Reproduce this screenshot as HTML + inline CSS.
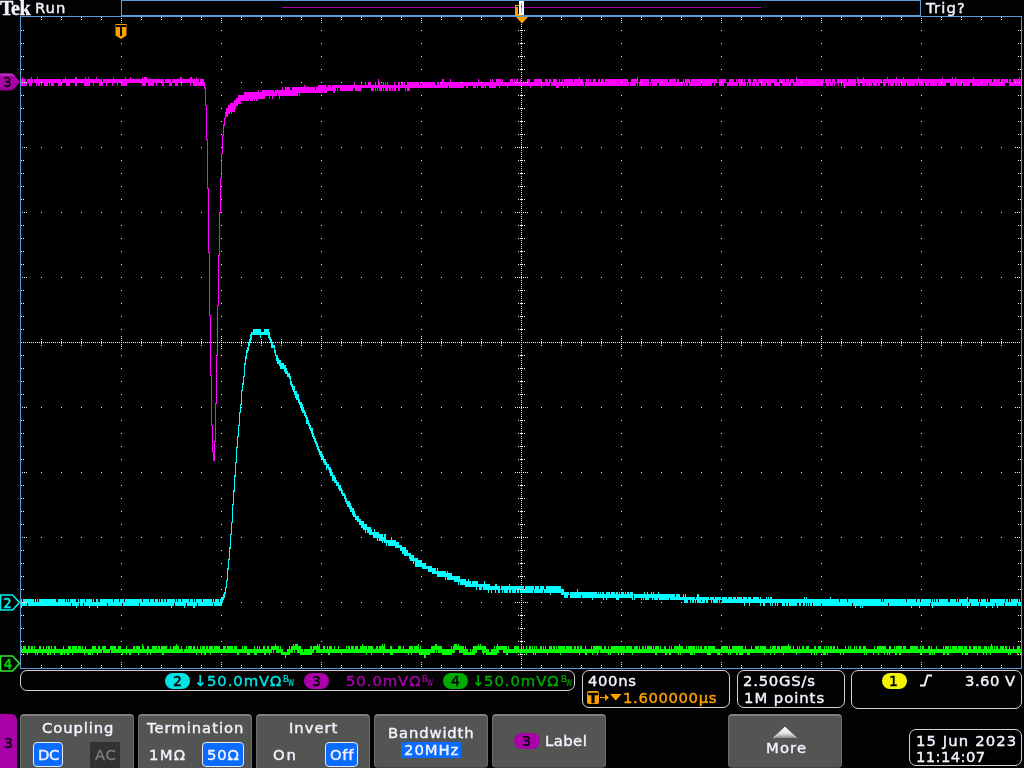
<!DOCTYPE html>
<html><head><meta charset="utf-8"><title>Tek scope</title>
<style>
html,body{margin:0;padding:0;background:#010201}
body{width:1024px;height:768px;overflow:hidden;position:relative;font-family:"DejaVu Sans","Liberation Sans",sans-serif;font-size:14.8px;color:#f3f3ff;line-height:16px}
.t{position:absolute;white-space:nowrap;will-change:transform;-webkit-text-stroke:.4px}
.box{position:absolute;box-sizing:border-box;border:1px solid #d4d4d4;border-radius:7px}
.pill{position:absolute;box-sizing:border-box;width:25px;height:16px;border-radius:8px}
.btn{position:absolute;box-sizing:border-box;top:714px;height:60px;width:114px;background:#535553;border:1px solid #6c6c6c;border-top:2px solid #808080;border-bottom:1px solid #444;border-radius:4px}
.sel{position:absolute;box-sizing:border-box;background:#0a6cff;border:1px solid #e8e8f0;border-radius:4px}
</style></head><body>
<svg width="1024" height="768" viewBox="0 0 1024 768" style="position:absolute;left:0;top:0" shape-rendering="crispEdges">
<rect x="20" y="16" width="1002" height="653" fill="#000"/>
<g fill="none" stroke-width="1" transform="translate(.5 0)">
<path stroke="#ff00ff" d="M21 79V86M22 77V86M23 79V86M24 79V86M25 79V86M26 82V86M27 79V83M28 79V83M29 79V86M30 79V86M31 77V86M32 79V83M33 82V83M34 79V83M35 79V83M36 79V86M37 77V83M38 79V86M39 79V86M40 79V83M41 79V86M42 79V83M43 79V83M44 79V86M45 79V86M46 79V86M47 79V86M48 79V83M49 79V86M50 79V83M51 79V86M52 79V86M53 79V86M54 79V83M55 79V83M56 79V83M57 79V83M58 79V86M59 79V86M60 79V86M61 82V86M62 79V83M63 79V83M64 79V83M65 77V83M66 79V86M67 79V86M68 79V86M69 79V86M70 79V83M71 79V83M72 79V83M73 79V83M74 79V83M75 77V86M76 77V86M77 79V83M78 79V83M79 79V83M80 79V83M81 79V83M82 79V83M83 79V83M84 79V86M85 77V86M86 79V86M87 79V86M88 77V86M89 79V86M90 79V83M91 79V83M92 79V83M93 79V86M94 79V83M95 79V83M96 77V83M97 79V83M98 79V83M99 79V86M100 79V86M101 79V86M102 82V86M103 79V83M104 79V83M105 79V83M106 79V86M107 79V83M108 79V83M109 79V83M110 79V83M111 79V83M112 79V86M113 77V83M114 79V83M115 79V83M116 79V83M117 79V86M118 79V83M119 79V83M120 79V83M121 79V86M122 79V86M123 79V86M124 79V86M125 77V86M126 79V86M127 79V83M128 79V83M129 79V83M130 77V83M131 79V83M132 79V83M133 79V83M134 79V83M135 79V83M136 79V83M137 79V83M138 79V83M139 79V83M140 79V83M141 79V83M142 77V86M143 79V86M144 77V86M145 77V86M146 77V83M147 79V83M148 79V86M149 79V86M150 79V86M151 79V86M152 79V86M153 79V86M154 79V83M155 79V83M156 79V86M157 79V83M158 79V83M159 79V83M160 79V83M161 79V83M162 79V86M163 79V86M164 82V83M165 79V83M166 79V83M167 79V83M168 79V83M169 79V86M170 79V86M171 82V86M172 79V83M173 79V83M174 79V83M175 79V86M176 79V86M177 79V86M178 79V83M179 79V83M180 77V83M181 77V86M182 79V83M183 79V83M184 79V83M185 79V83M186 79V83M187 79V83M188 79V83M189 79V83M190 77V86M191 77V83M192 79V83M193 79V86M194 79V86M195 79V86M196 77V86M197 79V86M198 79V86M199 82V86M200 79V86M201 79V86M202 79V86M203 79V86M204 82V89M205 87V106M206 105V140M207 139V189M208 188V253M209 252V316M210 315V376M211 375V426M212 425V452M213 451V461M214 441V461M215 403V442M216 355V404M217 305V356M218 255V306M219 212V256M220 178V213M221 153V179M222 135V154M223 124V136M224 118V126M225 112V119M226 108V117M227 108V117M228 105V114M229 105V114M230 103V112M231 103V114M232 103V112M233 103V112M234 100V112M235 100V109M236 98V106M237 98V106M238 95V104M239 95V104M240 95V104M241 95V101M242 95V101M243 95V101M244 92V101M245 92V101M246 92V101M247 92V101M248 92V101M249 92V99M250 92V101M251 92V101M252 92V101M253 92V99M254 92V101M255 92V99M256 92V101M257 92V101M258 90V99M259 92V99M260 92V99M261 92V99M262 90V99M263 90V99M264 90V99M265 90V96M266 90V96M267 90V96M268 90V96M269 90V99M270 90V96M271 90V96M272 90V99M273 90V96M274 92V96M275 90V96M276 90V96M277 90V93M278 90V96M279 90V99M280 90V96M281 90V96M282 87V96M283 90V96M284 90V96M285 87V96M286 87V96M287 87V96M288 87V96M289 87V96M290 90V96M291 90V96M292 87V96M293 87V96M294 87V96M295 87V96M296 87V96M297 87V96M298 87V93M299 87V96M300 87V93M301 87V93M302 87V93M303 87V93M304 85V93M305 87V93M306 87V93M307 87V93M308 87V93M309 87V93M310 87V93M311 87V93M312 87V93M313 87V93M314 87V93M315 90V93M316 87V93M317 87V93M318 85V93M319 85V93M320 85V93M321 85V93M322 85V93M323 85V91M324 85V93M325 85V93M326 87V93M327 87V91M328 85V91M329 85V91M330 85V91M331 87V91M332 85V91M333 85V93M334 85V93M335 85V91M336 85V88M337 85V91M338 85V88M339 85V88M340 85V91M341 85V91M342 85V91M343 85V91M344 85V91M345 85V91M346 85V91M347 85V91M348 85V91M349 85V91M350 85V91M351 85V91M352 85V91M353 85V88M354 82V88M355 85V91M356 85V91M357 85V91M358 85V91M359 85V91M360 85V91M361 82V88M362 85V88M363 85V88M364 85V88M365 82V88M366 85V88M367 85V88M368 82V88M369 82V88M370 82V88M371 85V91M372 85V91M373 85V91M374 85V88M375 82V91M376 85V88M377 85V91M378 79V88M379 82V91M380 85V91M381 85V91M382 85V88M383 82V91M384 85V88M385 82V91M386 85V91M387 82V91M388 85V88M389 85V91M390 85V91M391 85V88M392 85V91M393 85V88M394 82V91M395 85V91M396 85V88M397 85V88M398 82V91M399 82V91M400 85V88M401 82V88M402 82V88M403 85V88M404 82V88M405 85V91M406 85V88M407 82V91M408 82V91M409 82V91M410 82V88M411 82V88M412 82V88M413 82V88M414 82V88M415 82V88M416 82V88M417 82V88M418 82V88M419 85V88M420 82V88M421 85V88M422 82V88M423 82V88M424 82V88M425 82V88M426 82V88M427 82V88M428 82V88M429 82V88M430 82V88M431 82V88M432 82V88M433 82V88M434 82V88M435 85V88M436 85V88M437 82V88M438 82V88M439 85V88M440 82V88M441 82V88M442 79V88M443 79V88M444 82V88M445 82V88M446 82V88M447 82V88M448 82V86M449 82V88M450 79V88M451 82V88M452 82V88M453 82V88M454 82V88M455 82V88M456 82V88M457 82V88M458 82V88M459 82V88M460 82V88M461 82V88M462 82V88M463 82V88M464 82V86M465 82V86M466 82V88M467 82V88M468 82V86M469 82V86M470 82V86M471 82V86M472 82V86M473 82V88M474 82V88M475 82V88M476 82V86M477 82V88M478 79V86M479 82V86M480 82V86M481 82V88M482 82V88M483 82V88M484 82V86M485 82V88M486 82V86M487 82V86M488 82V86M489 82V88M490 79V88M491 82V88M492 79V88M493 82V88M494 82V88M495 82V88M496 79V86M497 79V86M498 79V86M499 79V88M500 79V86M501 82V86M502 79V86M503 82V86M504 82V86M505 82V86M506 82V86M507 82V88M508 82V86M509 82V86M510 79V86M511 79V86M512 79V86M513 82V86M514 79V86M515 82V86M516 79V86M517 79V86M518 82V86M519 82V86M520 79V86M521 82V86M522 82V86M523 82V86M524 82V86M525 82V86M526 82V86M527 79V86M528 79V86M529 79V86M530 82V88M531 82V86M532 82V86M533 82V86M534 79V86M535 79V86M536 79V86M537 79V86M538 79V86M539 79V86M540 79V86M541 79V88M542 82V86M543 82V86M544 82V86M545 79V86M546 79V86M547 79V86M548 82V86M549 79V86M550 79V83M551 82V86M552 82V86M553 79V86M554 79V86M555 79V86M556 79V88M557 82V88M558 82V88M559 79V86M560 82V86M561 82V86M562 79V86M563 82V88M564 79V86M565 79V86M566 79V86M567 79V88M568 79V86M569 79V86M570 79V86M571 79V86M572 79V86M573 82V86M574 79V86M575 79V86M576 79V86M577 79V86M578 79V86M579 77V86M580 79V86M581 79V86M582 79V86M583 82V86M584 82V83M585 82V86M586 79V86M587 79V86M588 79V86M589 82V86M590 79V86M591 82V86M592 82V86M593 79V86M594 79V86M595 79V86M596 82V86M597 82V86M598 79V86M599 79V86M600 82V86M601 79V86M602 79V86M603 79V86M604 82V86M605 79V86M606 79V86M607 79V86M608 79V86M609 79V86M610 79V86M611 79V86M612 79V86M613 79V86M614 79V86M615 79V86M616 79V86M617 79V86M618 79V86M619 79V86M620 79V86M621 79V86M622 79V86M623 79V86M624 79V86M625 79V86M626 79V86M627 79V86M628 82V86M629 82V83M630 82V86M631 79V86M632 79V86M633 79V86M634 79V86M635 79V86M636 79V83M637 77V86M638 82V83M639 82V86M640 79V86M641 79V86M642 79V86M643 79V86M644 79V86M645 79V86M646 79V86M647 79V86M648 79V86M649 82V83M650 82V86M651 79V83M652 79V86M653 79V86M654 79V86M655 79V86M656 79V86M657 79V83M658 79V83M659 79V86M660 79V86M661 79V86M662 79V86M663 79V86M664 79V86M665 79V86M666 79V86M667 79V86M668 82V86M669 79V86M670 79V86M671 79V86M672 79V86M673 79V86M674 79V86M675 79V86M676 82V86M677 79V86M678 79V86M679 82V86M680 82V86M681 82V86M682 82V86M683 79V83M684 82V86M685 79V83M686 79V86M687 79V86M688 79V83M689 79V86M690 82V86M691 79V86M692 79V86M693 79V86M694 79V86M695 79V86M696 79V86M697 79V86M698 79V86M699 79V86M700 79V86M701 79V83M702 79V86M703 79V86M704 79V86M705 79V86M706 79V86M707 79V86M708 79V86M709 79V86M710 79V86M711 79V86M712 79V83M713 79V83M714 79V86M715 79V83M716 79V83M717 82V83M718 82V83M719 79V86M720 79V86M721 79V86M722 79V86M723 79V86M724 79V83M725 79V83M726 82V83M727 82V86M728 82V86M729 79V86M730 79V86M731 79V86M732 79V86M733 79V86M734 82V86M735 82V86M736 79V86M737 82V86M738 79V83M739 79V86M740 79V86M741 79V86M742 79V86M743 82V86M744 79V86M745 82V86M746 82V83M747 82V86M748 79V83M749 79V86M750 79V86M751 82V83M752 82V86M753 79V86M754 79V86M755 79V83M756 79V86M757 82V86M758 79V86M759 79V83M760 79V83M761 79V86M762 79V86M763 79V86M764 79V86M765 79V86M766 79V83M767 79V86M768 79V86M769 79V86M770 79V86M771 79V83M772 79V83M773 79V83M774 79V86M775 79V86M776 79V86M777 82V86M778 82V86M779 79V86M780 79V83M781 79V83M782 79V86M783 79V86M784 79V86M785 82V86M786 79V86M787 79V86M788 79V86M789 82V86M790 79V86M791 79V83M792 79V83M793 79V86M794 82V86M795 82V86M796 77V86M797 79V86M798 79V86M799 79V86M800 79V86M801 79V86M802 79V86M803 79V86M804 79V86M805 79V86M806 79V86M807 79V86M808 79V86M809 79V86M810 79V86M811 79V86M812 79V86M813 79V86M814 79V86M815 79V86M816 79V86M817 79V86M818 79V86M819 79V86M820 79V86M821 79V86M822 79V86M823 79V83M824 82V83M825 79V83M826 79V86M827 79V86M828 79V86M829 79V83M830 79V86M831 82V86M832 79V86M833 79V83M834 79V86M835 82V83M836 82V83M837 79V83M838 79V86M839 79V83M840 79V83M841 79V86M842 79V83M843 79V86M844 79V88M845 79V86M846 79V86M847 82V86M848 79V86M849 79V86M850 79V86M851 79V86M852 79V86M853 79V86M854 79V86M855 79V86M856 82V83M857 77V83M858 79V86M859 79V86M860 79V83M861 79V83M862 79V86M863 77V86M864 79V86M865 79V83M866 79V86M867 79V86M868 79V86M869 79V86M870 79V86M871 79V86M872 79V83M873 79V86M874 79V86M875 79V86M876 79V86M877 79V83M878 79V86M879 79V86M880 79V83M881 79V83M882 82V83M883 79V86M884 79V86M885 79V86M886 79V83M887 77V83M888 79V86M889 79V83M890 79V86M891 79V86M892 79V86M893 79V86M894 79V83M895 79V86M896 77V86M897 79V83M898 79V86M899 79V86M900 79V83M901 79V86M902 79V86M903 77V86M904 79V86M905 79V86M906 79V83M907 79V86M908 79V86M909 79V86M910 79V86M911 79V86M912 79V86M913 79V86M914 79V86M915 79V83M916 79V86M917 79V86M918 77V83M919 79V86M920 79V86M921 79V86M922 79V86M923 79V86M924 79V83M925 79V86M926 79V86M927 79V86M928 79V86M929 79V83M930 79V86M931 79V86M932 79V86M933 79V86M934 79V86M935 79V86M936 79V86M937 79V83M938 79V86M939 79V86M940 79V86M941 79V86M942 77V86M943 79V86M944 79V86M945 79V86M946 79V83M947 79V83M948 79V83M949 79V83M950 79V86M951 79V86M952 77V86M953 79V86M954 79V86M955 77V86M956 79V83M957 79V86M958 79V86M959 79V86M960 79V86M961 79V86M962 79V83M963 79V86M964 79V86M965 79V86M966 79V86M967 79V86M968 79V86M969 79V86M970 79V83M971 79V83M972 79V86M973 77V86M974 79V86M975 79V86M976 79V86M977 79V86M978 79V86M979 79V86M980 79V86M981 79V86M982 79V86M983 79V86M984 79V86M985 79V86M986 79V86M987 79V86M988 79V83M989 79V86M990 79V86M991 79V86M992 82V86M993 79V86M994 79V86M995 79V86M996 79V86M997 79V86M998 79V86M999 79V86M1000 82V86M1001 79V86M1002 79V86M1003 79V86M1004 79V86M1005 79V83M1006 79V83M1007 79V83M1008 82V83M1009 79V86M1010 79V86M1011 82V86M1012 82V86M1013 79V86M1014 79V86M1015 79V86M1016 79V86M1017 79V86M1018 79V86M1019 77V86M1020 79V86"/>
<path stroke="#00ffff" d="M21 599V608M22 602V606M23 599V606M24 599V606M25 599V606M26 599V606M27 599V603M28 599V606M29 599V606M30 599V606M31 599V606M32 599V606M33 599V606M34 602V606M35 599V606M36 602V606M37 599V606M38 602V606M39 599V606M40 599V606M41 599V606M42 599V606M43 599V606M44 599V606M45 599V606M46 599V606M47 599V606M48 599V606M49 599V606M50 599V606M51 599V606M52 599V606M53 599V606M54 599V606M55 599V606M56 602V606M57 602V606M58 599V606M59 599V606M60 599V606M61 599V606M62 599V606M63 599V606M64 599V606M65 602V606M66 599V606M67 602V606M68 599V606M69 602V606M70 599V606M71 599V603M72 599V606M73 599V606M74 599V606M75 599V606M76 602V608M77 602V606M78 599V606M79 602V603M80 599V606M81 599V606M82 599V606M83 599V603M84 599V606M85 602V606M86 599V606M87 599V606M88 599V606M89 599V608M90 599V606M91 599V606M92 602V606M93 599V606M94 602V606M95 602V606M96 599V606M97 599V608M98 602V606M99 602V606M100 599V606M101 599V606M102 599V606M103 599V606M104 599V606M105 599V606M106 599V606M107 599V603M108 599V606M109 599V606M110 599V606M111 599V606M112 599V606M113 602V606M114 599V606M115 599V606M116 599V606M117 599V606M118 599V606M119 602V606M120 599V606M121 599V606M122 599V603M123 599V606M124 602V606M125 599V606M126 599V606M127 599V606M128 599V606M129 599V606M130 599V606M131 599V606M132 599V606M133 599V606M134 599V606M135 599V606M136 599V606M137 599V606M138 599V606M139 599V603M140 599V606M141 599V606M142 602V606M143 599V606M144 599V606M145 599V606M146 599V606M147 599V606M148 599V606M149 602V606M150 599V606M151 599V606M152 599V606M153 599V606M154 602V606M155 599V606M156 599V606M157 599V606M158 602V606M159 599V606M160 602V606M161 599V606M162 599V606M163 602V606M164 599V606M165 599V606M166 602V606M167 599V606M168 599V606M169 599V606M170 599V606M171 599V608M172 599V606M173 599V606M174 599V603M175 602V606M176 599V606M177 602V606M178 599V606M179 599V606M180 599V606M181 602V606M182 599V606M183 599V606M184 599V608M185 599V606M186 599V603M187 599V606M188 599V606M189 602V606M190 599V606M191 599V606M192 599V606M193 602V608M194 599V608M195 602V606M196 599V606M197 599V603M198 599V606M199 599V606M200 599V606M201 599V606M202 602V606M203 599V606M204 599V606M205 599V606M206 599V606M207 599V606M208 599V606M209 599V606M210 599V606M211 599V606M212 602V606M213 599V603M214 602V606M215 599V606M216 599V606M217 599V606M218 599V606M219 602V606M220 599V606M221 597V606M222 597V603M223 594V600M224 592V598M225 587V594M226 580V588M227 568V581M228 559V570M229 547V560M230 534V549M231 522V535M232 504V523M233 490V505M234 475V492M235 462V477M236 447V463M237 436V448M238 425V437M239 412V426M240 404V413M241 390V405M242 383V391M243 376V385M244 363V377M245 356V365M246 350V359M247 347V353M248 342V351M249 339V346M250 334V343M251 332V340M252 332V335M253 329V335M254 329V335M255 329V335M256 329V335M257 329V335M258 329V335M259 329V335M260 329V338M261 332V335M262 332V335M263 332V335M264 329V335M265 329V335M266 329V335M267 329V335M268 329V338M269 332V340M270 337V343M271 339V348M272 342V348M273 345V348M274 345V353M275 350V356M276 355V361M277 355V364M278 358V364M279 360V366M280 360V369M281 363V369M282 363V369M283 363V369M284 365V372M285 365V374M286 368V374M287 371V377M288 373V377M289 373V379M290 376V385M291 381V387M292 384V390M293 386V392M294 386V395M295 391V398M296 391V400M297 394V400M298 394V403M299 399V405M300 402V408M301 402V411M302 404V413M303 407V413M304 410V416M305 412V418M306 415V424M307 417V424M308 420V426M309 423V429M310 425V431M311 428V434M312 428V437M313 433V439M314 436V442M315 438V444M316 441V447M317 443V450M318 446V452M319 449V455M320 451V457M321 451V460M322 454V460M323 456V463M324 459V465M325 459V465M326 462V470M327 464V468M328 464V470M329 467V473M330 467V476M331 469V476M332 472V481M333 475V481M334 475V483M335 477V483M336 480V486M337 482V486M338 482V489M339 485V491M340 485V491M341 488V494M342 490V496M343 493V496M344 493V499M345 495V502M346 498V504M347 501V507M348 501V507M349 501V509M350 503V512M351 506V512M352 508V515M353 508V517M354 511V517M355 514V520M356 516V520M357 516V522M358 516V522M359 519V525M360 519V525M361 521V528M362 521V528M363 521V530M364 524V530M365 524V533M366 524V530M367 527V533M368 527V533M369 527V535M370 527V535M371 529V535M372 532V535M373 532V538M374 529V538M375 532V538M376 532V538M377 532V541M378 532V538M379 534V541M380 534V541M381 534V541M382 534V543M383 537V541M384 534V543M385 534V543M386 540V546M387 540V543M388 540V546M389 540V546M390 540V546M391 537V546M392 540V546M393 540V546M394 540V546M395 540V548M396 542V548M397 542V548M398 542V548M399 545V548M400 545V551M401 545V551M402 547V554M403 547V554M404 547V556M405 547V556M406 550V556M407 550V556M408 553V556M409 553V559M410 553V561M411 555V561M412 555V561M413 555V564M414 558V561M415 558V567M416 558V567M417 558V567M418 560V567M419 560V567M420 560V567M421 560V567M422 563V569M423 563V569M424 563V569M425 563V569M426 566V569M427 566V569M428 566V572M429 566V572M430 566V572M431 566V572M432 568V574M433 568V574M434 568V574M435 568V574M436 571V574M437 568V577M438 571V577M439 571V577M440 571V577M441 571V577M442 571V577M443 571V577M444 571V577M445 571V580M446 573V577M447 571V580M448 573V580M449 573V580M450 573V580M451 573V580M452 576V580M453 576V580M454 576V582M455 576V582M456 576V582M457 576V582M458 576V585M459 576V582M460 579V585M461 579V585M462 579V585M463 579V585M464 579V585M465 579V587M466 581V587M467 581V587M468 579V587M469 581V587M470 581V587M471 584V587M472 581V587M473 581V587M474 581V587M475 581V587M476 581V590M477 581V587M478 584V587M479 584V590M480 584V590M481 584V590M482 584V587M483 584V590M484 581V590M485 584V590M486 584V590M487 584V590M488 584V593M489 584V590M490 586V590M491 586V593M492 586V590M493 586V590M494 586V590M495 584V593M496 584V590M497 586V590M498 586V593M499 586V593M500 589V590M501 586V590M502 586V593M503 586V590M504 586V593M505 586V593M506 586V593M507 586V593M508 586V590M509 584V593M510 586V593M511 586V590M512 586V593M513 586V593M514 586V593M515 586V593M516 586V590M517 586V593M518 586V593M519 586V590M520 586V593M521 586V593M522 586V593M523 586V593M524 589V593M525 586V593M526 586V593M527 586V593M528 586V593M529 586V593M530 586V593M531 586V593M532 586V593M533 586V590M534 589V593M535 586V593M536 586V593M537 586V593M538 586V593M539 589V593M540 586V593M541 586V593M542 586V593M543 586V590M544 589V593M545 589V593M546 586V593M547 586V593M548 586V593M549 586V593M550 586V595M551 586V593M552 586V593M553 586V593M554 586V593M555 586V593M556 586V593M557 586V593M558 586V593M559 586V593M560 586V593M561 589V595M562 589V595M563 589V595M564 592V598M565 592V598M566 592V598M567 592V598M568 592V595M569 594V595M570 592V598M571 592V598M572 592V598M573 592V598M574 592V598M575 592V598M576 592V598M577 589V598M578 592V598M579 592V598M580 592V598M581 592V595M582 592V598M583 592V598M584 592V598M585 592V598M586 592V598M587 592V598M588 592V598M589 592V598M590 592V598M591 592V598M592 592V600M593 592V598M594 592V598M595 592V598M596 592V598M597 594V598M598 592V598M599 594V598M600 592V598M601 594V598M602 592V598M603 592V600M604 594V598M605 594V598M606 592V600M607 592V598M608 592V598M609 592V598M610 594V598M611 592V598M612 592V598M613 592V598M614 592V598M615 594V598M616 592V600M617 592V600M618 594V600M619 592V598M620 594V598M621 592V598M622 592V598M623 592V598M624 594V598M625 592V598M626 594V598M627 592V598M628 592V598M629 594V598M630 592V598M631 592V598M632 592V600M633 594V595M634 594V600M635 594V598M636 594V598M637 594V598M638 594V598M639 594V598M640 594V598M641 594V600M642 594V598M643 594V600M644 592V598M645 594V600M646 594V600M647 592V600M648 594V600M649 594V598M650 594V598M651 592V598M652 594V600M653 592V598M654 594V600M655 594V600M656 594V600M657 594V600M658 592V598M659 594V600M660 594V600M661 594V600M662 594V600M663 594V600M664 594V600M665 594V600M666 594V600M667 594V600M668 594V600M669 594V598M670 594V600M671 594V600M672 594V600M673 594V600M674 594V600M675 597V600M676 594V600M677 594V600M678 594V600M679 594V600M680 597V600M681 597V600M682 597V600M683 594V600M684 597V603M685 594V603M686 597V603M687 597V603M688 597V600M689 597V600M690 597V603M691 597V600M692 597V603M693 597V603M694 597V600M695 599V603M696 597V600M697 594V603M698 594V603M699 597V603M700 597V603M701 597V600M702 597V603M703 597V603M704 597V603M705 597V600M706 597V603M707 597V603M708 597V600M709 599V600M710 597V600M711 597V603M712 597V600M713 597V603M714 599V603M715 597V603M716 597V603M717 597V603M718 597V600M719 597V603M720 597V600M721 599V600M722 597V603M723 597V603M724 597V603M725 597V603M726 597V603M727 599V603M728 597V603M729 597V603M730 597V603M731 597V603M732 599V603M733 597V603M734 597V603M735 597V603M736 599V603M737 597V603M738 597V603M739 597V603M740 597V603M741 597V603M742 599V603M743 597V603M744 597V606M745 597V603M746 597V603M747 599V603M748 597V603M749 597V606M750 597V603M751 599V603M752 599V603M753 597V603M754 597V603M755 597V603M756 597V603M757 597V603M758 597V603M759 599V603M760 597V606M761 599V603M762 599V603M763 599V606M764 599V606M765 599V603M766 597V603M767 599V603M768 597V603M769 599V603M770 597V606M771 597V603M772 599V606M773 599V603M774 599V603M775 599V606M776 599V603M777 599V606M778 599V603M779 599V603M780 599V603M781 599V603M782 599V606M783 599V606M784 599V606M785 599V603M786 599V606M787 599V606M788 599V603M789 599V606M790 599V606M791 599V606M792 599V606M793 599V606M794 599V606M795 599V606M796 599V606M797 599V603M798 599V603M799 599V606M800 599V606M801 599V603M802 599V603M803 599V606M804 597V606M805 599V603M806 597V606M807 599V603M808 599V606M809 599V603M810 599V606M811 599V606M812 599V603M813 599V606M814 599V606M815 599V606M816 599V606M817 599V606M818 599V606M819 599V606M820 599V606M821 599V603M822 599V606M823 599V606M824 599V606M825 599V606M826 599V606M827 599V606M828 599V606M829 599V606M830 597V606M831 599V606M832 599V606M833 599V606M834 599V606M835 599V606M836 599V606M837 599V606M838 599V606M839 602V606M840 599V606M841 599V606M842 599V606M843 599V606M844 599V606M845 599V606M846 599V606M847 602V606M848 599V606M849 599V606M850 599V606M851 599V606M852 599V603M853 599V606M854 599V606M855 599V608M856 599V606M857 599V606M858 599V606M859 599V606M860 599V608M861 599V606M862 599V608M863 599V606M864 599V606M865 599V606M866 599V606M867 599V606M868 599V606M869 599V606M870 599V606M871 599V606M872 599V606M873 599V606M874 599V606M875 599V606M876 599V606M877 599V606M878 599V606M879 599V606M880 599V606M881 602V606M882 599V606M883 602V606M884 599V606M885 599V606M886 599V606M887 599V606M888 599V603M889 599V606M890 599V606M891 599V606M892 599V606M893 599V606M894 599V606M895 599V606M896 599V606M897 599V606M898 599V606M899 599V606M900 599V606M901 599V606M902 599V606M903 599V606M904 599V606M905 599V606M906 602V606M907 599V606M908 599V606M909 599V606M910 599V606M911 599V608M912 599V606M913 599V606M914 599V606M915 599V606M916 602V606M917 599V606M918 599V606M919 599V608M920 602V606M921 599V606M922 599V606M923 599V606M924 599V606M925 599V606M926 599V606M927 599V606M928 599V606M929 599V606M930 599V603M931 602V606M932 599V608M933 602V606M934 599V606M935 602V606M936 599V606M937 599V606M938 602V606M939 599V606M940 599V606M941 599V606M942 599V606M943 599V606M944 599V606M945 599V606M946 599V606M947 599V606M948 602V606M949 602V606M950 599V606M951 599V606M952 599V606M953 599V606M954 599V606M955 599V606M956 602V606M957 599V606M958 602V606M959 599V606M960 599V606M961 599V603M962 599V606M963 599V606M964 599V606M965 599V606M966 599V606M967 597V608M968 602V606M969 599V606M970 599V603M971 599V606M972 599V606M973 599V606M974 599V606M975 599V606M976 599V606M977 599V606M978 602V606M979 599V603M980 602V606M981 599V606M982 599V606M983 599V606M984 599V606M985 599V606M986 602V608M987 599V606M988 602V606M989 602V606M990 599V606M991 599V606M992 599V608M993 599V606M994 599V606M995 599V603M996 599V606M997 599V608M998 599V606M999 599V606M1000 599V606M1001 599V606M1002 599V606M1003 599V606M1004 599V603M1005 602V606M1006 599V606M1007 599V606M1008 602V606M1009 599V606M1010 602V606M1011 599V606M1012 599V606M1013 599V606M1014 599V606M1015 599V606M1016 599V606M1017 599V603M1018 602V606M1019 599V606M1020 602V606"/>
<path stroke="#00ff00" d="M21 646V653M22 649V653M23 646V653M24 646V653M25 646V653M26 649V653M27 649V655M28 646V653M29 646V653M30 649V653M31 646V653M32 646V653M33 649V653M34 646V653M35 649V655M36 649V653M37 649V655M38 649V653M39 646V653M40 646V653M41 649V653M42 649V655M43 646V653M44 649V653M45 649V653M46 646V653M47 649V655M48 646V655M49 646V653M50 649V655M51 646V653M52 649V653M53 649V653M54 646V655M55 646V653M56 649V653M57 649V653M58 649V653M59 649V653M60 649V655M61 649V655M62 649V655M63 646V653M64 649V655M65 649V653M66 649V653M67 649V655M68 646V655M69 646V653M70 646V653M71 649V653M72 646V655M73 646V653M74 646V653M75 646V653M76 646V653M77 649V653M78 646V653M79 646V653M80 646V653M81 649V653M82 646V653M83 649V653M84 649V655M85 646V653M86 649V653M87 649V653M88 649V655M89 649V655M90 649V655M91 649V653M92 646V655M93 646V653M94 646V653M95 646V653M96 649V653M97 649V655M98 646V653M99 646V653M100 649V653M101 649V653M102 646V650M103 646V653M104 646V653M105 646V653M106 649V653M107 649V653M108 649V653M109 649V653M110 646V650M111 646V653M112 646V653M113 646V653M114 646V653M115 646V653M116 649V653M117 649V653M118 646V653M119 646V653M120 646V653M121 649V653M122 649V655M123 649V653M124 649V653M125 649V653M126 646V655M127 649V653M128 649V653M129 649V655M130 649V655M131 649V653M132 649V653M133 646V653M134 646V653M135 649V653M136 646V653M137 646V653M138 646V655M139 646V653M140 649V653M141 649V653M142 644V653M143 646V653M144 649V653M145 649V653M146 649V653M147 646V655M148 646V653M149 649V653M150 649V655M151 649V653M152 646V653M153 646V653M154 646V653M155 646V653M156 646V653M157 649V653M158 646V653M159 646V653M160 649V653M161 646V653M162 646V655M163 646V655M164 646V653M165 646V653M166 646V653M167 649V653M168 649V653M169 649V653M170 646V653M171 649V653M172 649V653M173 646V653M174 646V653M175 646V653M176 644V653M177 646V653M178 646V653M179 649V653M180 649V653M181 646V653M182 649V653M183 652V653M184 649V653M185 649V653M186 646V653M187 649V653M188 646V653M189 646V653M190 646V653M191 646V653M192 649V653M193 646V653M194 646V653M195 649V653M196 649V655M197 646V653M198 649V653M199 649V653M200 646V653M201 649V655M202 646V653M203 646V653M204 646V655M205 649V655M206 646V653M207 646V653M208 649V653M209 646V653M210 646V655M211 646V653M212 646V653M213 649V653M214 646V653M215 646V653M216 646V653M217 646V653M218 646V653M219 646V653M220 649V653M221 649V653M222 649V653M223 646V653M224 646V653M225 646V653M226 649V653M227 646V653M228 646V653M229 646V653M230 646V653M231 646V653M232 646V653M233 649V653M234 646V653M235 646V653M236 646V653M237 649V655M238 649V655M239 649V653M240 649V653M241 649V653M242 646V653M243 649V653M244 646V653M245 646V653M246 646V653M247 649V655M248 649V655M249 649V655M250 649V653M251 649V653M252 649V653M253 649V653M254 646V655M255 649V655M256 649V655M257 646V653M258 649V653M259 646V653M260 649V653M261 649V653M262 649V653M263 646V653M264 646V655M265 649V655M266 649V653M267 646V653M268 646V653M269 649V655M270 649V653M271 646V653M272 646V650M273 646V653M274 646V650M275 644V650M276 646V653M277 646V653M278 646V653M279 649V653M280 646V653M281 649V655M282 649V655M283 652V655M284 652V655M285 652V658M286 652V655M287 649V655M288 649V655M289 646V655M290 649V653M291 646V653M292 646V653M293 644V650M294 646V653M295 644V650M296 644V650M297 644V653M298 646V653M299 646V653M300 646V655M301 649V655M302 649V655M303 652V655M304 649V655M305 649V655M306 649V655M307 649V655M308 649V655M309 649V655M310 646V655M311 646V655M312 649V653M313 646V653M314 646V650M315 646V650M316 646V653M317 644V653M318 646V653M319 644V653M320 649V653M321 649V653M322 649V653M323 646V653M324 646V653M325 649V653M326 649V653M327 646V653M328 649V655M329 646V655M330 646V653M331 646V653M332 649V653M333 649V653M334 646V653M335 649V653M336 649V653M337 649V653M338 646V653M339 649V653M340 649V653M341 649V655M342 649V653M343 649V653M344 649V653M345 649V653M346 646V653M347 649V653M348 646V653M349 646V653M350 649V653M351 646V653M352 646V653M353 646V653M354 649V653M355 646V653M356 646V653M357 646V653M358 649V653M359 649V653M360 646V653M361 646V653M362 644V653M363 646V653M364 646V653M365 646V653M366 646V655M367 649V653M368 646V653M369 646V653M370 646V653M371 646V655M372 646V653M373 649V653M374 649V653M375 649V653M376 646V653M377 646V653M378 649V653M379 646V653M380 646V653M381 646V653M382 644V653M383 646V655M384 644V653M385 649V653M386 649V653M387 649V653M388 649V653M389 649V653M390 646V655M391 646V655M392 649V655M393 649V653M394 649V653M395 649V653M396 649V653M397 649V653M398 646V653M399 646V653M400 646V653M401 649V653M402 649V653M403 646V653M404 649V653M405 649V653M406 649V653M407 649V653M408 649V655M409 646V653M410 646V653M411 646V655M412 646V653M413 649V653M414 646V653M415 646V653M416 646V653M417 646V653M418 644V653M419 649V655M420 646V655M421 649V655M422 649V655M423 649V655M424 649V658M425 649V658M426 649V655M427 649V655M428 649V655M429 649V655M430 649V653M431 646V653M432 646V653M433 646V653M434 646V653M435 644V650M436 644V653M437 646V650M438 646V653M439 646V653M440 646V653M441 646V653M442 649V655M443 649V655M444 649V655M445 649V655M446 649V655M447 649V655M448 649V655M449 649V655M450 649V655M451 646V655M452 649V653M453 646V653M454 644V653M455 644V650M456 644V650M457 646V650M458 644V650M459 646V653M460 646V653M461 646V653M462 646V653M463 646V655M464 649V655M465 646V655M466 649V655M467 649V655M468 652V655M469 652V655M470 649V655M471 652V655M472 649V655M473 646V655M474 646V655M475 646V653M476 646V653M477 646V650M478 644V650M479 646V650M480 644V650M481 646V650M482 646V653M483 646V655M484 646V653M485 646V653M486 649V655M487 649V655M488 649V655M489 652V655M490 652V655M491 649V655M492 649V655M493 649V655M494 646V655M495 649V655M496 646V655M497 644V653M498 646V653M499 646V650M500 646V650M501 646V650M502 646V650M503 646V653M504 646V653M505 646V653M506 646V655M507 649V655M508 646V653M509 649V653M510 649V653M511 649V653M512 649V653M513 649V653M514 646V653M515 646V653M516 646V653M517 646V653M518 646V653M519 649V653M520 649V655M521 646V653M522 649V653M523 646V653M524 649V653M525 649V653M526 646V655M527 649V653M528 649V653M529 646V653M530 646V653M531 649V653M532 646V653M533 649V655M534 646V653M535 649V655M536 646V653M537 649V653M538 649V653M539 649V653M540 646V653M541 646V653M542 649V653M543 646V653M544 649V653M545 646V653M546 649V653M547 649V655M548 649V653M549 646V653M550 646V653M551 646V653M552 649V653M553 646V653M554 646V653M555 649V653M556 646V653M557 649V653M558 646V653M559 646V653M560 646V655M561 646V653M562 646V653M563 646V653M564 646V653M565 649V653M566 646V653M567 646V653M568 646V653M569 646V653M570 646V653M571 646V653M572 649V653M573 649V653M574 646V653M575 646V653M576 649V653M577 646V653M578 646V653M579 649V655M580 646V653M581 646V653M582 649V653M583 649V653M584 649V653M585 646V655M586 649V655M587 649V653M588 649V653M589 649V653M590 649V653M591 646V653M592 649V655M593 646V653M594 646V653M595 646V653M596 646V653M597 646V655M598 646V653M599 646V650M600 646V653M601 646V653M602 649V653M603 649V653M604 646V653M605 646V653M606 649V653M607 649V653M608 646V655M609 649V653M610 649V655M611 646V653M612 646V653M613 646V653M614 646V653M615 646V653M616 646V653M617 646V653M618 646V655M619 646V653M620 646V653M621 646V655M622 646V653M623 646V655M624 646V653M625 649V653M626 646V653M627 646V653M628 646V653M629 646V653M630 646V653M631 646V653M632 649V655M633 649V653M634 646V653M635 646V653M636 646V653M637 646V653M638 649V653M639 646V653M640 649V653M641 649V653M642 646V653M643 646V653M644 649V653M645 646V653M646 649V653M647 646V653M648 646V653M649 646V653M650 646V653M651 646V653M652 649V653M653 646V653M654 649V653M655 646V655M656 646V655M657 646V653M658 646V653M659 649V653M660 646V653M661 649V653M662 649V653M663 649V653M664 646V653M665 646V655M666 649V655M667 649V653M668 649V653M669 646V655M670 649V655M671 646V653M672 649V653M673 649V653M674 646V653M675 646V653M676 646V653M677 646V653M678 646V655M679 644V653M680 646V655M681 646V653M682 646V653M683 649V653M684 649V653M685 649V653M686 646V653M687 649V653M688 646V653M689 646V653M690 646V655M691 646V655M692 646V655M693 646V653M694 646V655M695 649V653M696 646V653M697 649V653M698 646V653M699 649V653M700 646V653M701 646V653M702 649V653M703 649V653M704 646V653M705 646V653M706 646V653M707 649V655M708 646V655M709 646V655M710 646V655M711 646V653M712 646V653M713 646V653M714 646V653M715 649V653M716 649V653M717 649V655M718 649V655M719 649V655M720 649V653M721 646V653M722 646V653M723 646V653M724 646V653M725 646V653M726 646V653M727 646V653M728 649V655M729 646V653M730 649V655M731 649V653M732 646V653M733 646V653M734 646V653M735 646V653M736 646V655M737 646V655M738 646V653M739 646V655M740 646V655M741 646V655M742 646V655M743 649V653M744 649V653M745 646V653M746 649V653M747 649V655M748 649V655M749 649V655M750 649V653M751 646V653M752 649V653M753 649V653M754 649V653M755 646V653M756 646V653M757 646V653M758 646V653M759 649V653M760 646V653M761 646V653M762 646V653M763 646V653M764 646V655M765 646V653M766 649V653M767 649V653M768 649V653M769 649V653M770 646V655M771 649V653M772 646V653M773 646V653M774 646V655M775 646V653M776 649V653M777 646V653M778 646V653M779 646V653M780 649V653M781 646V653M782 646V653M783 646V655M784 646V653M785 646V653M786 646V653M787 646V653M788 644V653M789 646V653M790 646V653M791 649V653M792 649V653M793 646V653M794 649V653M795 649V653M796 649V655M797 646V653M798 649V653M799 646V653M800 649V653M801 649V653M802 646V653M803 646V653M804 649V653M805 649V653M806 646V653M807 646V653M808 646V653M809 649V653M810 649V653M811 649V655M812 649V653M813 649V653M814 646V655M815 646V653M816 649V655M817 649V653M818 646V653M819 646V653M820 646V653M821 649V653M822 649V653M823 649V655M824 646V655M825 649V655M826 646V653M827 649V655M828 646V653M829 649V653M830 646V653M831 646V653M832 649V653M833 646V653M834 646V653M835 649V653M836 649V653M837 646V653M838 649V653M839 649V653M840 649V655M841 649V653M842 649V653M843 649V655M844 649V653M845 646V653M846 649V653M847 649V653M848 646V653M849 649V653M850 646V653M851 649V653M852 649V653M853 649V653M854 646V653M855 649V653M856 646V653M857 649V653M858 649V653M859 646V653M860 646V653M861 649V653M862 649V653M863 646V653M864 646V655M865 646V653M866 649V655M867 649V653M868 649V653M869 649V653M870 649V653M871 649V653M872 649V653M873 649V655M874 646V653M875 649V653M876 649V653M877 646V653M878 646V655M879 646V653M880 646V653M881 646V653M882 646V653M883 646V653M884 646V655M885 646V653M886 649V653M887 649V655M888 649V653M889 646V655M890 646V653M891 649V653M892 649V653M893 649V653M894 646V653M895 649V655M896 646V655M897 646V653M898 646V653M899 646V655M900 646V655M901 646V653M902 649V653M903 646V653M904 646V653M905 646V653M906 649V653M907 649V653M908 649V653M909 649V653M910 646V653M911 646V653M912 646V653M913 646V653M914 646V653M915 646V653M916 646V653M917 646V653M918 649V653M919 649V653M920 646V655M921 649V655M922 646V653M923 646V653M924 649V653M925 649V653M926 649V653M927 649V653M928 646V653M929 646V655M930 649V655M931 646V653M932 649V655M933 649V653M934 649V655M935 649V653M936 646V653M937 649V653M938 649V653M939 649V653M940 649V653M941 649V653M942 649V653M943 646V655M944 649V655M945 646V653M946 646V653M947 646V655M948 646V655M949 649V653M950 646V653M951 649V653M952 646V653M953 646V653M954 646V653M955 646V653M956 646V653M957 649V653M958 646V653M959 646V653M960 646V653M961 646V653M962 646V655M963 649V653M964 646V653M965 646V655M966 646V655M967 649V655M968 649V653M969 646V653M970 646V653M971 649V653M972 649V653M973 646V653M974 646V653M975 646V653M976 646V653M977 649V655M978 646V653M979 646V653M980 646V653M981 649V653M982 649V653M983 649V655M984 646V653M985 646V653M986 646V655M987 649V653M988 646V653M989 649V653M990 646V655M991 644V653M992 646V653M993 649V653M994 646V653M995 649V653M996 646V653M997 646V653M998 649V653M999 649V653M1000 646V653M1001 646V653M1002 646V653M1003 646V653M1004 649V653M1005 646V653M1006 646V653M1007 649V653M1008 649V655M1009 646V653M1010 649V655M1011 649V653M1012 649V653M1013 646V653M1014 649V653M1015 649V653M1016 649V653M1017 646V655M1018 646V653M1019 646V653M1020 649V655"/>
</g>
<g stroke-width="1" fill="none" stroke="#f2f2f2">
<line x1="41" y1="82.5" x2="1021" y2="82.5" stroke-dasharray="1 19"/>
<line x1="22" y1="82.5" x2="27" y2="82.5" stroke-dasharray="1 1"/>
<line x1="1015" y1="82.5" x2="1020" y2="82.5" stroke-dasharray="1 1"/>
<line x1="41" y1="147.5" x2="1021" y2="147.5" stroke-dasharray="1 19"/>
<line x1="22" y1="147.5" x2="27" y2="147.5" stroke-dasharray="1 1"/>
<line x1="1015" y1="147.5" x2="1020" y2="147.5" stroke-dasharray="1 1"/>
<line x1="41" y1="212.5" x2="1021" y2="212.5" stroke-dasharray="1 19"/>
<line x1="22" y1="212.5" x2="27" y2="212.5" stroke-dasharray="1 1"/>
<line x1="1015" y1="212.5" x2="1020" y2="212.5" stroke-dasharray="1 1"/>
<line x1="41" y1="277.5" x2="1021" y2="277.5" stroke-dasharray="1 19"/>
<line x1="22" y1="277.5" x2="27" y2="277.5" stroke-dasharray="1 1"/>
<line x1="1015" y1="277.5" x2="1020" y2="277.5" stroke-dasharray="1 1"/>
<line x1="41" y1="407.5" x2="1021" y2="407.5" stroke-dasharray="1 19"/>
<line x1="22" y1="407.5" x2="27" y2="407.5" stroke-dasharray="1 1"/>
<line x1="1015" y1="407.5" x2="1020" y2="407.5" stroke-dasharray="1 1"/>
<line x1="41" y1="472.5" x2="1021" y2="472.5" stroke-dasharray="1 19"/>
<line x1="22" y1="472.5" x2="27" y2="472.5" stroke-dasharray="1 1"/>
<line x1="1015" y1="472.5" x2="1020" y2="472.5" stroke-dasharray="1 1"/>
<line x1="41" y1="537.5" x2="1021" y2="537.5" stroke-dasharray="1 19"/>
<line x1="22" y1="537.5" x2="27" y2="537.5" stroke-dasharray="1 1"/>
<line x1="1015" y1="537.5" x2="1020" y2="537.5" stroke-dasharray="1 1"/>
<line x1="41" y1="602.5" x2="1021" y2="602.5" stroke-dasharray="1 19"/>
<line x1="22" y1="602.5" x2="27" y2="602.5" stroke-dasharray="1 1"/>
<line x1="1015" y1="602.5" x2="1020" y2="602.5" stroke-dasharray="1 1"/>
<line x1="121.5" y1="30" x2="121.5" y2="667" stroke-dasharray="1 12"/>
<line x1="121.5" y1="18" x2="121.5" y2="23" stroke-dasharray="1 1"/>
<line x1="121.5" y1="662" x2="121.5" y2="667" stroke-dasharray="1 1"/>
<line x1="221.5" y1="30" x2="221.5" y2="667" stroke-dasharray="1 12"/>
<line x1="221.5" y1="18" x2="221.5" y2="23" stroke-dasharray="1 1"/>
<line x1="221.5" y1="662" x2="221.5" y2="667" stroke-dasharray="1 1"/>
<line x1="321.5" y1="30" x2="321.5" y2="667" stroke-dasharray="1 12"/>
<line x1="321.5" y1="18" x2="321.5" y2="23" stroke-dasharray="1 1"/>
<line x1="321.5" y1="662" x2="321.5" y2="667" stroke-dasharray="1 1"/>
<line x1="421.5" y1="30" x2="421.5" y2="667" stroke-dasharray="1 12"/>
<line x1="421.5" y1="18" x2="421.5" y2="23" stroke-dasharray="1 1"/>
<line x1="421.5" y1="662" x2="421.5" y2="667" stroke-dasharray="1 1"/>
<line x1="621.5" y1="30" x2="621.5" y2="667" stroke-dasharray="1 12"/>
<line x1="621.5" y1="18" x2="621.5" y2="23" stroke-dasharray="1 1"/>
<line x1="621.5" y1="662" x2="621.5" y2="667" stroke-dasharray="1 1"/>
<line x1="721.5" y1="30" x2="721.5" y2="667" stroke-dasharray="1 12"/>
<line x1="721.5" y1="18" x2="721.5" y2="23" stroke-dasharray="1 1"/>
<line x1="721.5" y1="662" x2="721.5" y2="667" stroke-dasharray="1 1"/>
<line x1="821.5" y1="30" x2="821.5" y2="667" stroke-dasharray="1 12"/>
<line x1="821.5" y1="18" x2="821.5" y2="23" stroke-dasharray="1 1"/>
<line x1="821.5" y1="662" x2="821.5" y2="667" stroke-dasharray="1 1"/>
<line x1="921.5" y1="30" x2="921.5" y2="667" stroke-dasharray="1 12"/>
<line x1="921.5" y1="18" x2="921.5" y2="23" stroke-dasharray="1 1"/>
<line x1="921.5" y1="662" x2="921.5" y2="667" stroke-dasharray="1 1"/>
<line x1="21" y1="342.5" x2="1021" y2="342.5" stroke-dasharray="1 1"/>
<line x1="521.5" y1="17" x2="521.5" y2="668" stroke-dasharray="1 2 1 1 1 1 1 1 1 1 1 1 1 1 1 1 1 1 1 1 1 1 1 2"/>
<line x1="41" y1="339.5" x2="102" y2="339.5" stroke-dasharray="1 19"/>
<line x1="41" y1="341.5" x2="102" y2="341.5" stroke-dasharray="1 19"/>
<line x1="41" y1="343.5" x2="102" y2="343.5" stroke-dasharray="1 19"/>
<line x1="41" y1="345.5" x2="102" y2="345.5" stroke-dasharray="1 19"/>
<line x1="518.5" y1="30" x2="518.5" y2="70" stroke-dasharray="1 12"/>
<line x1="520.5" y1="30" x2="520.5" y2="70" stroke-dasharray="1 12"/>
<line x1="522.5" y1="30" x2="522.5" y2="70" stroke-dasharray="1 12"/>
<line x1="524.5" y1="30" x2="524.5" y2="70" stroke-dasharray="1 12"/>
<line x1="141" y1="339.5" x2="202" y2="339.5" stroke-dasharray="1 19"/>
<line x1="141" y1="341.5" x2="202" y2="341.5" stroke-dasharray="1 19"/>
<line x1="141" y1="343.5" x2="202" y2="343.5" stroke-dasharray="1 19"/>
<line x1="141" y1="345.5" x2="202" y2="345.5" stroke-dasharray="1 19"/>
<line x1="518.5" y1="95" x2="518.5" y2="135" stroke-dasharray="1 12"/>
<line x1="520.5" y1="95" x2="520.5" y2="135" stroke-dasharray="1 12"/>
<line x1="522.5" y1="95" x2="522.5" y2="135" stroke-dasharray="1 12"/>
<line x1="524.5" y1="95" x2="524.5" y2="135" stroke-dasharray="1 12"/>
<line x1="241" y1="339.5" x2="302" y2="339.5" stroke-dasharray="1 19"/>
<line x1="241" y1="341.5" x2="302" y2="341.5" stroke-dasharray="1 19"/>
<line x1="241" y1="343.5" x2="302" y2="343.5" stroke-dasharray="1 19"/>
<line x1="241" y1="345.5" x2="302" y2="345.5" stroke-dasharray="1 19"/>
<line x1="518.5" y1="160" x2="518.5" y2="200" stroke-dasharray="1 12"/>
<line x1="520.5" y1="160" x2="520.5" y2="200" stroke-dasharray="1 12"/>
<line x1="522.5" y1="160" x2="522.5" y2="200" stroke-dasharray="1 12"/>
<line x1="524.5" y1="160" x2="524.5" y2="200" stroke-dasharray="1 12"/>
<line x1="341" y1="339.5" x2="402" y2="339.5" stroke-dasharray="1 19"/>
<line x1="341" y1="341.5" x2="402" y2="341.5" stroke-dasharray="1 19"/>
<line x1="341" y1="343.5" x2="402" y2="343.5" stroke-dasharray="1 19"/>
<line x1="341" y1="345.5" x2="402" y2="345.5" stroke-dasharray="1 19"/>
<line x1="518.5" y1="225" x2="518.5" y2="265" stroke-dasharray="1 12"/>
<line x1="520.5" y1="225" x2="520.5" y2="265" stroke-dasharray="1 12"/>
<line x1="522.5" y1="225" x2="522.5" y2="265" stroke-dasharray="1 12"/>
<line x1="524.5" y1="225" x2="524.5" y2="265" stroke-dasharray="1 12"/>
<line x1="441" y1="339.5" x2="502" y2="339.5" stroke-dasharray="1 19"/>
<line x1="441" y1="341.5" x2="502" y2="341.5" stroke-dasharray="1 19"/>
<line x1="441" y1="343.5" x2="502" y2="343.5" stroke-dasharray="1 19"/>
<line x1="441" y1="345.5" x2="502" y2="345.5" stroke-dasharray="1 19"/>
<line x1="518.5" y1="290" x2="518.5" y2="330" stroke-dasharray="1 12"/>
<line x1="520.5" y1="290" x2="520.5" y2="330" stroke-dasharray="1 12"/>
<line x1="522.5" y1="290" x2="522.5" y2="330" stroke-dasharray="1 12"/>
<line x1="524.5" y1="290" x2="524.5" y2="330" stroke-dasharray="1 12"/>
<line x1="541" y1="339.5" x2="602" y2="339.5" stroke-dasharray="1 19"/>
<line x1="541" y1="341.5" x2="602" y2="341.5" stroke-dasharray="1 19"/>
<line x1="541" y1="343.5" x2="602" y2="343.5" stroke-dasharray="1 19"/>
<line x1="541" y1="345.5" x2="602" y2="345.5" stroke-dasharray="1 19"/>
<line x1="518.5" y1="355" x2="518.5" y2="395" stroke-dasharray="1 12"/>
<line x1="520.5" y1="355" x2="520.5" y2="395" stroke-dasharray="1 12"/>
<line x1="522.5" y1="355" x2="522.5" y2="395" stroke-dasharray="1 12"/>
<line x1="524.5" y1="355" x2="524.5" y2="395" stroke-dasharray="1 12"/>
<line x1="641" y1="339.5" x2="702" y2="339.5" stroke-dasharray="1 19"/>
<line x1="641" y1="341.5" x2="702" y2="341.5" stroke-dasharray="1 19"/>
<line x1="641" y1="343.5" x2="702" y2="343.5" stroke-dasharray="1 19"/>
<line x1="641" y1="345.5" x2="702" y2="345.5" stroke-dasharray="1 19"/>
<line x1="518.5" y1="420" x2="518.5" y2="460" stroke-dasharray="1 12"/>
<line x1="520.5" y1="420" x2="520.5" y2="460" stroke-dasharray="1 12"/>
<line x1="522.5" y1="420" x2="522.5" y2="460" stroke-dasharray="1 12"/>
<line x1="524.5" y1="420" x2="524.5" y2="460" stroke-dasharray="1 12"/>
<line x1="741" y1="339.5" x2="802" y2="339.5" stroke-dasharray="1 19"/>
<line x1="741" y1="341.5" x2="802" y2="341.5" stroke-dasharray="1 19"/>
<line x1="741" y1="343.5" x2="802" y2="343.5" stroke-dasharray="1 19"/>
<line x1="741" y1="345.5" x2="802" y2="345.5" stroke-dasharray="1 19"/>
<line x1="518.5" y1="485" x2="518.5" y2="525" stroke-dasharray="1 12"/>
<line x1="520.5" y1="485" x2="520.5" y2="525" stroke-dasharray="1 12"/>
<line x1="522.5" y1="485" x2="522.5" y2="525" stroke-dasharray="1 12"/>
<line x1="524.5" y1="485" x2="524.5" y2="525" stroke-dasharray="1 12"/>
<line x1="841" y1="339.5" x2="902" y2="339.5" stroke-dasharray="1 19"/>
<line x1="841" y1="341.5" x2="902" y2="341.5" stroke-dasharray="1 19"/>
<line x1="841" y1="343.5" x2="902" y2="343.5" stroke-dasharray="1 19"/>
<line x1="841" y1="345.5" x2="902" y2="345.5" stroke-dasharray="1 19"/>
<line x1="518.5" y1="550" x2="518.5" y2="590" stroke-dasharray="1 12"/>
<line x1="520.5" y1="550" x2="520.5" y2="590" stroke-dasharray="1 12"/>
<line x1="522.5" y1="550" x2="522.5" y2="590" stroke-dasharray="1 12"/>
<line x1="524.5" y1="550" x2="524.5" y2="590" stroke-dasharray="1 12"/>
<line x1="941" y1="339.5" x2="1002" y2="339.5" stroke-dasharray="1 19"/>
<line x1="941" y1="341.5" x2="1002" y2="341.5" stroke-dasharray="1 19"/>
<line x1="941" y1="343.5" x2="1002" y2="343.5" stroke-dasharray="1 19"/>
<line x1="941" y1="345.5" x2="1002" y2="345.5" stroke-dasharray="1 19"/>
<line x1="518.5" y1="615" x2="518.5" y2="655" stroke-dasharray="1 12"/>
<line x1="520.5" y1="615" x2="520.5" y2="655" stroke-dasharray="1 12"/>
<line x1="522.5" y1="615" x2="522.5" y2="655" stroke-dasharray="1 12"/>
<line x1="524.5" y1="615" x2="524.5" y2="655" stroke-dasharray="1 12"/>
<line x1="515" y1="82.5" x2="528" y2="82.5" stroke-dasharray="1 1"/>
<line x1="121.5" y1="336" x2="121.5" y2="349" stroke-dasharray="1 1"/>
<line x1="515" y1="147.5" x2="528" y2="147.5" stroke-dasharray="1 1"/>
<line x1="221.5" y1="336" x2="221.5" y2="349" stroke-dasharray="1 1"/>
<line x1="515" y1="212.5" x2="528" y2="212.5" stroke-dasharray="1 1"/>
<line x1="321.5" y1="336" x2="321.5" y2="349" stroke-dasharray="1 1"/>
<line x1="515" y1="277.5" x2="528" y2="277.5" stroke-dasharray="1 1"/>
<line x1="421.5" y1="336" x2="421.5" y2="349" stroke-dasharray="1 1"/>
<line x1="515" y1="407.5" x2="528" y2="407.5" stroke-dasharray="1 1"/>
<line x1="621.5" y1="336" x2="621.5" y2="349" stroke-dasharray="1 1"/>
<line x1="515" y1="472.5" x2="528" y2="472.5" stroke-dasharray="1 1"/>
<line x1="721.5" y1="336" x2="721.5" y2="349" stroke-dasharray="1 1"/>
<line x1="515" y1="537.5" x2="528" y2="537.5" stroke-dasharray="1 1"/>
<line x1="821.5" y1="336" x2="821.5" y2="349" stroke-dasharray="1 1"/>
<line x1="515" y1="602.5" x2="528" y2="602.5" stroke-dasharray="1 1"/>
<line x1="921.5" y1="336" x2="921.5" y2="349" stroke-dasharray="1 1"/>
<g stroke="#8c8c8c">
<line x1="521.5" y1="42" x2="521.5" y2="660" stroke-dasharray="1 1 1 23"/>
</g>
<line x1="521.5" y1="146" x2="521.5" y2="149" stroke-dasharray="3 0"/>
<line x1="521.5" y1="276" x2="521.5" y2="279" stroke-dasharray="3 0"/>
<line x1="521.5" y1="406" x2="521.5" y2="409" stroke-dasharray="3 0"/>
<line x1="521.5" y1="536" x2="521.5" y2="539" stroke-dasharray="3 0"/>
<line x1="41" y1="17.5" x2="102" y2="17.5" stroke-dasharray="1 19"/>
<line x1="41" y1="19.5" x2="102" y2="19.5" stroke-dasharray="1 19"/>
<line x1="41" y1="665.5" x2="102" y2="665.5" stroke-dasharray="1 19"/>
<line x1="41" y1="667.5" x2="102" y2="667.5" stroke-dasharray="1 19"/>
<line x1="21.5" y1="30" x2="21.5" y2="70" stroke-dasharray="1 12"/>
<line x1="23.5" y1="30" x2="23.5" y2="70" stroke-dasharray="1 12"/>
<line x1="1018.5" y1="30" x2="1018.5" y2="70" stroke-dasharray="1 12"/>
<line x1="1020.5" y1="30" x2="1020.5" y2="70" stroke-dasharray="1 12"/>
<line x1="141" y1="17.5" x2="202" y2="17.5" stroke-dasharray="1 19"/>
<line x1="141" y1="19.5" x2="202" y2="19.5" stroke-dasharray="1 19"/>
<line x1="141" y1="665.5" x2="202" y2="665.5" stroke-dasharray="1 19"/>
<line x1="141" y1="667.5" x2="202" y2="667.5" stroke-dasharray="1 19"/>
<line x1="21.5" y1="95" x2="21.5" y2="135" stroke-dasharray="1 12"/>
<line x1="23.5" y1="95" x2="23.5" y2="135" stroke-dasharray="1 12"/>
<line x1="1018.5" y1="95" x2="1018.5" y2="135" stroke-dasharray="1 12"/>
<line x1="1020.5" y1="95" x2="1020.5" y2="135" stroke-dasharray="1 12"/>
<line x1="241" y1="17.5" x2="302" y2="17.5" stroke-dasharray="1 19"/>
<line x1="241" y1="19.5" x2="302" y2="19.5" stroke-dasharray="1 19"/>
<line x1="241" y1="665.5" x2="302" y2="665.5" stroke-dasharray="1 19"/>
<line x1="241" y1="667.5" x2="302" y2="667.5" stroke-dasharray="1 19"/>
<line x1="21.5" y1="160" x2="21.5" y2="200" stroke-dasharray="1 12"/>
<line x1="23.5" y1="160" x2="23.5" y2="200" stroke-dasharray="1 12"/>
<line x1="1018.5" y1="160" x2="1018.5" y2="200" stroke-dasharray="1 12"/>
<line x1="1020.5" y1="160" x2="1020.5" y2="200" stroke-dasharray="1 12"/>
<line x1="341" y1="17.5" x2="402" y2="17.5" stroke-dasharray="1 19"/>
<line x1="341" y1="19.5" x2="402" y2="19.5" stroke-dasharray="1 19"/>
<line x1="341" y1="665.5" x2="402" y2="665.5" stroke-dasharray="1 19"/>
<line x1="341" y1="667.5" x2="402" y2="667.5" stroke-dasharray="1 19"/>
<line x1="21.5" y1="225" x2="21.5" y2="265" stroke-dasharray="1 12"/>
<line x1="23.5" y1="225" x2="23.5" y2="265" stroke-dasharray="1 12"/>
<line x1="1018.5" y1="225" x2="1018.5" y2="265" stroke-dasharray="1 12"/>
<line x1="1020.5" y1="225" x2="1020.5" y2="265" stroke-dasharray="1 12"/>
<line x1="441" y1="17.5" x2="502" y2="17.5" stroke-dasharray="1 19"/>
<line x1="441" y1="19.5" x2="502" y2="19.5" stroke-dasharray="1 19"/>
<line x1="441" y1="665.5" x2="502" y2="665.5" stroke-dasharray="1 19"/>
<line x1="441" y1="667.5" x2="502" y2="667.5" stroke-dasharray="1 19"/>
<line x1="21.5" y1="290" x2="21.5" y2="330" stroke-dasharray="1 12"/>
<line x1="23.5" y1="290" x2="23.5" y2="330" stroke-dasharray="1 12"/>
<line x1="1018.5" y1="290" x2="1018.5" y2="330" stroke-dasharray="1 12"/>
<line x1="1020.5" y1="290" x2="1020.5" y2="330" stroke-dasharray="1 12"/>
<line x1="541" y1="17.5" x2="602" y2="17.5" stroke-dasharray="1 19"/>
<line x1="541" y1="19.5" x2="602" y2="19.5" stroke-dasharray="1 19"/>
<line x1="541" y1="665.5" x2="602" y2="665.5" stroke-dasharray="1 19"/>
<line x1="541" y1="667.5" x2="602" y2="667.5" stroke-dasharray="1 19"/>
<line x1="21.5" y1="355" x2="21.5" y2="395" stroke-dasharray="1 12"/>
<line x1="23.5" y1="355" x2="23.5" y2="395" stroke-dasharray="1 12"/>
<line x1="1018.5" y1="355" x2="1018.5" y2="395" stroke-dasharray="1 12"/>
<line x1="1020.5" y1="355" x2="1020.5" y2="395" stroke-dasharray="1 12"/>
<line x1="641" y1="17.5" x2="702" y2="17.5" stroke-dasharray="1 19"/>
<line x1="641" y1="19.5" x2="702" y2="19.5" stroke-dasharray="1 19"/>
<line x1="641" y1="665.5" x2="702" y2="665.5" stroke-dasharray="1 19"/>
<line x1="641" y1="667.5" x2="702" y2="667.5" stroke-dasharray="1 19"/>
<line x1="21.5" y1="420" x2="21.5" y2="460" stroke-dasharray="1 12"/>
<line x1="23.5" y1="420" x2="23.5" y2="460" stroke-dasharray="1 12"/>
<line x1="1018.5" y1="420" x2="1018.5" y2="460" stroke-dasharray="1 12"/>
<line x1="1020.5" y1="420" x2="1020.5" y2="460" stroke-dasharray="1 12"/>
<line x1="741" y1="17.5" x2="802" y2="17.5" stroke-dasharray="1 19"/>
<line x1="741" y1="19.5" x2="802" y2="19.5" stroke-dasharray="1 19"/>
<line x1="741" y1="665.5" x2="802" y2="665.5" stroke-dasharray="1 19"/>
<line x1="741" y1="667.5" x2="802" y2="667.5" stroke-dasharray="1 19"/>
<line x1="21.5" y1="485" x2="21.5" y2="525" stroke-dasharray="1 12"/>
<line x1="23.5" y1="485" x2="23.5" y2="525" stroke-dasharray="1 12"/>
<line x1="1018.5" y1="485" x2="1018.5" y2="525" stroke-dasharray="1 12"/>
<line x1="1020.5" y1="485" x2="1020.5" y2="525" stroke-dasharray="1 12"/>
<line x1="841" y1="17.5" x2="902" y2="17.5" stroke-dasharray="1 19"/>
<line x1="841" y1="19.5" x2="902" y2="19.5" stroke-dasharray="1 19"/>
<line x1="841" y1="665.5" x2="902" y2="665.5" stroke-dasharray="1 19"/>
<line x1="841" y1="667.5" x2="902" y2="667.5" stroke-dasharray="1 19"/>
<line x1="21.5" y1="550" x2="21.5" y2="590" stroke-dasharray="1 12"/>
<line x1="23.5" y1="550" x2="23.5" y2="590" stroke-dasharray="1 12"/>
<line x1="1018.5" y1="550" x2="1018.5" y2="590" stroke-dasharray="1 12"/>
<line x1="1020.5" y1="550" x2="1020.5" y2="590" stroke-dasharray="1 12"/>
<line x1="941" y1="17.5" x2="1002" y2="17.5" stroke-dasharray="1 19"/>
<line x1="941" y1="19.5" x2="1002" y2="19.5" stroke-dasharray="1 19"/>
<line x1="941" y1="665.5" x2="1002" y2="665.5" stroke-dasharray="1 19"/>
<line x1="941" y1="667.5" x2="1002" y2="667.5" stroke-dasharray="1 19"/>
<line x1="21.5" y1="615" x2="21.5" y2="655" stroke-dasharray="1 12"/>
<line x1="23.5" y1="615" x2="23.5" y2="655" stroke-dasharray="1 12"/>
<line x1="1018.5" y1="615" x2="1018.5" y2="655" stroke-dasharray="1 12"/>
<line x1="1020.5" y1="615" x2="1020.5" y2="655" stroke-dasharray="1 12"/>
</g>
<g fill="none" stroke="#5b9bd5" stroke-width="1">
<rect x="20.5" y="16.5" width="1001" height="652"/>
<path d="M121.5 16V.5H920.5V16"/>
<path d="M121 15.5H921"/>
</g>
<!-- record bar -->
<path d="M282 7.5H761" stroke="#aa00aa" stroke-width="1"/>
<rect x="515" y="5" width="4" height="11" fill="#ffa000"/>
<rect x="515" y="15" width="6" height="1" fill="#ffa000"/>
<rect x="516" y="6" width="3" height="1" fill="#000"/>
<rect x="518" y="7" width="1" height="7" fill="#000"/>
<rect x="519" y="1" width="5" height="14" fill="#fff"/>
<rect x="521" y="3" width="1" height="10" fill="#ffa000"/>
<rect x="521" y="6" width="1" height="1" fill="#000"/>
<polygon points="516,17 528,17 522,23.5" fill="#ffa000" shape-rendering="auto"/>
<!-- trigger position marker -->
<path d="M115.5 24H126.500V35.5L121 39L115.500 35.500Z" fill="#ffa000" shape-rendering="auto"/>
<rect x="116" y="25" width="10" height="2" fill="#000"/>
<rect x="120" y="26" width="2" height="10" fill="#000"/>
</svg>
<svg width="24" height="768" viewBox="0 0 24 768" style="position:absolute;left:0;top:0;will-change:transform">
<defs><linearGradient id="pg" x1="0" y1="0" x2="0" y2="1"><stop offset="0" stop-color="#d040d0"/><stop offset=".2" stop-color="#aa00aa"/><stop offset=".85" stop-color="#aa00aa"/><stop offset="1" stop-color="#800080"/></linearGradient></defs>
<path d="M0 73.500H12.500L20 81.750L12.500 90.500H0Z" fill="url(#pg)"/>
<path d="M0.500 595H12.500L19.500 602.500L12.500 610H0.500Z" fill="#000200" stroke="#00f0f0" stroke-width="1.600"/>
<path d="M0.500 656H12.500L19.500 663.500L12.500 671H0.500Z" fill="#000200" stroke="#30e830" stroke-width="1.600"/>
<g font-family="'DejaVu Sans','Liberation Sans',sans-serif" font-size="14" text-anchor="middle">
<text x="7.500" y="87" fill="#000" stroke="#000" stroke-width=".5" textLength="8" lengthAdjust="spacingAndGlyphs">3</text>
<text x="7.500" y="607.800" fill="#00f0f0" stroke="#00f0f0" stroke-width=".6" textLength="8" lengthAdjust="spacingAndGlyphs">2</text>
<text x="8" y="668.800" fill="#00d000" stroke="#00d000" stroke-width=".6" textLength="8.500" lengthAdjust="spacingAndGlyphs">4</text>
</g></svg>

<!-- status boxes -->
<div class="box" style="left:20px;top:670px;width:555px;height:21px"></div>
<div class="pill" style="left:165px;top:673px;background:#00e4e4"></div>
<div class="pill" style="left:304px;top:673px;background:#aa00aa"></div>
<div class="pill" style="left:443px;top:673px;background:#00aa00"></div>

<div class="box" style="left:582px;top:670px;width:148px;height:38px"></div>
<div class="t" style="left:587px;top:691px;width:12px;height:13px;background:#ffa000;border-radius:2px"></div>
<svg class="t" style="left:599px;top:690px" width="24" height="14" viewBox="0 0 24 14" shape-rendering="crispEdges"><path d="M1 7.500H7" stroke="#ffa000" stroke-width="1" fill="none"/><polygon points="6,4 10,7.500 6,11" fill="#ffa000" shape-rendering="auto"/><polygon points="11,4 22.500,4 16.750,10.500" fill="#ffa000" shape-rendering="auto"/></svg>

<div class="box" style="left:737px;top:670px;width:108px;height:38px"></div>

<div class="box" style="left:851px;top:670px;width:171px;height:39px"></div>
<div class="pill" style="left:882px;top:673px;background:#f4f400"></div>
<svg class="t" style="left:919px;top:674px" width="15" height="13" viewBox="0 0 15 13"><path d="M1 11.500H5.500L8.500 1.500H13" fill="none" stroke="#f3f3ff" stroke-width="1.900"/></svg>

<div class="box" style="left:909px;top:729px;width:113px;height:37px"></div>

<!-- menu -->
<div class="t" style="left:0;top:714px;width:17px;height:60px;background:#aa00aa;border-radius:0 6px 6px 0"></div>

<div class="btn" style="left:20px"></div>
<div class="sel" style="left:33px;top:742px;width:30px;height:25px"></div>
<div class="t" style="left:90px;top:742px;width:30px;height:26px;background:#323232"></div>

<div class="btn" style="left:138px"></div>
<div class="sel" style="left:202px;top:742px;width:42px;height:25px"></div>

<div class="btn" style="left:256px"></div>
<div class="sel" style="left:325px;top:742px;width:33px;height:25px"></div>

<div class="btn" style="left:374px;height:54px"></div>
<div class="t" style="left:401px;top:742px;width:60px;height:16px;background:#0a6cff"></div>

<div class="btn" style="left:492px;height:54px"></div>
<div class="pill" style="left:514px;top:733px;width:26px;background:#aa00aa"></div>

<div class="btn" style="left:728px;height:54px"></div>
<svg class="t" style="left:772px;top:726px" width="26" height="13" viewBox="0 0 26 13"><defs><linearGradient id="tg" x1="0" y1="0" x2="0" y2="1"><stop offset="0" stop-color="#ffffff"/><stop offset=".6" stop-color="#e0e0e0"/><stop offset="1" stop-color="#8a8a8a"/></linearGradient></defs><polygon points="13,1 24.500,12 1.500,12" fill="url(#tg)"/><path d="M1.500 12L13 1L24.500 12" stroke="#f0f0f0" stroke-width="1" fill="none"/></svg>

<div class="t" style="left:35.0px;top:0px;letter-spacing:1.00px">Run</div>
<div class="t" style="left:926.0px;top:0px;letter-spacing:1.14px">Trig?</div>
<div class="t" style="left:193.8px;top:673px;color:#00e4e4">↓</div>
<div class="t" style="left:207.0px;top:673px;letter-spacing:0.92px;color:#00e4e4">50.0mVΩ</div>
<div class="t" style="left:345.6px;top:673px;letter-spacing:0.95px;color:#aa00aa">50.0mVΩ</div>
<div class="t" style="left:472.2px;top:673px;color:#00aa00">↓</div>
<div class="t" style="left:484.2px;top:673px;letter-spacing:0.97px;color:#00aa00">50.0mVΩ</div>
<div class="t" style="left:172.5px;top:673px;color:#000;font-size:14px">2</div>
<div class="t" style="left:311.5px;top:673px;color:#000;font-size:14px">3</div>
<div class="t" style="left:451.0px;top:673px;color:#000;font-size:14px">4</div>
<div class="t" style="left:889.0px;top:673px;color:#000;font-size:14px">1</div>
<div class="t" style="left:588.0px;top:673px;letter-spacing:0.64px">400ns</div>
<div class="t" style="left:588.0px;top:690px;color:#000;font-weight:bold">T</div>
<div class="t" style="left:623.3px;top:690px;letter-spacing:0.63px;color:#ffa000">1.600000μs</div>
<div class="t" style="left:742.8px;top:673px;letter-spacing:0.77px">2.50GS/s</div>
<div class="t" style="left:743.6px;top:690px;letter-spacing:0.97px">1M points</div>
<div class="t" style="left:965.0px;top:673px;letter-spacing:0.47px">3.60 V</div>
<div class="t" style="left:916.3px;top:733px;letter-spacing:1.11px">15 Jun 2023</div>
<div class="t" style="left:916.3px;top:749px;letter-spacing:0.38px">11:14:07</div>
<div class="t" style="left:3.5px;top:735px;color:#000;font-size:14px">3</div>
<div class="t" style="left:42.0px;top:720px;letter-spacing:0.89px">Coupling</div>
<div class="t" style="left:37.6px;top:747px;letter-spacing:-0.29px">DC</div>
<div class="t" style="left:95.0px;top:747px;letter-spacing:0.74px;color:#7c7c7c">AC</div>
<div class="t" style="left:147.2px;top:720px;letter-spacing:0.96px">Termination</div>
<div class="t" style="left:149.3px;top:747px;letter-spacing:1.26px">1MΩ</div>
<div class="t" style="left:207.2px;top:747px;letter-spacing:0.79px">50Ω</div>
<div class="t" style="left:288.7px;top:720px;letter-spacing:0.96px">Invert</div>
<div class="t" style="left:273.0px;top:747px;letter-spacing:1.75px">On</div>
<div class="t" style="left:330.0px;top:747px;letter-spacing:0.68px">Off</div>
<div class="t" style="left:388.3px;top:725px;letter-spacing:0.86px">Bandwidth</div>
<div class="t" style="left:404.0px;top:742px;letter-spacing:0.97px">20MHz</div>
<div class="t" style="left:522.0px;top:733px;color:#000;font-size:14px">3</div>
<div class="t" style="left:545.3px;top:733px;letter-spacing:0.47px">Label</div>
<div class="t" style="left:765.6px;top:740px;letter-spacing:1.14px">More</div>
<div class="t" style="left:283.0px;top:671px;font-size:8.5px;-webkit-text-stroke:.2px;color:#00e4e4">B</div>
<div class="t" style="left:288.3px;top:675px;font-size:8.5px;-webkit-text-stroke:.2px;color:#00e4e4;transform:scaleX(.7);transform-origin:0 0">W</div>
<div class="t" style="left:421.8px;top:671px;font-size:8.5px;-webkit-text-stroke:.2px;color:#aa00aa">B</div>
<div class="t" style="left:427.1px;top:675px;font-size:8.5px;-webkit-text-stroke:.2px;color:#aa00aa;transform:scaleX(.7);transform-origin:0 0">W</div>
<div class="t" style="left:560.5px;top:671px;font-size:8.5px;-webkit-text-stroke:.2px;color:#00aa00">B</div>
<div class="t" style="left:565.8px;top:675px;font-size:8.5px;-webkit-text-stroke:.2px;color:#00aa00;transform:scaleX(.7);transform-origin:0 0">W</div>
<div class="t" style="left:0;top:-4px;font-family:'Liberation Serif',serif;font-weight:bold;font-size:20px;letter-spacing:-0.4px;line-height:24px">Tek</div>
</body></html>
